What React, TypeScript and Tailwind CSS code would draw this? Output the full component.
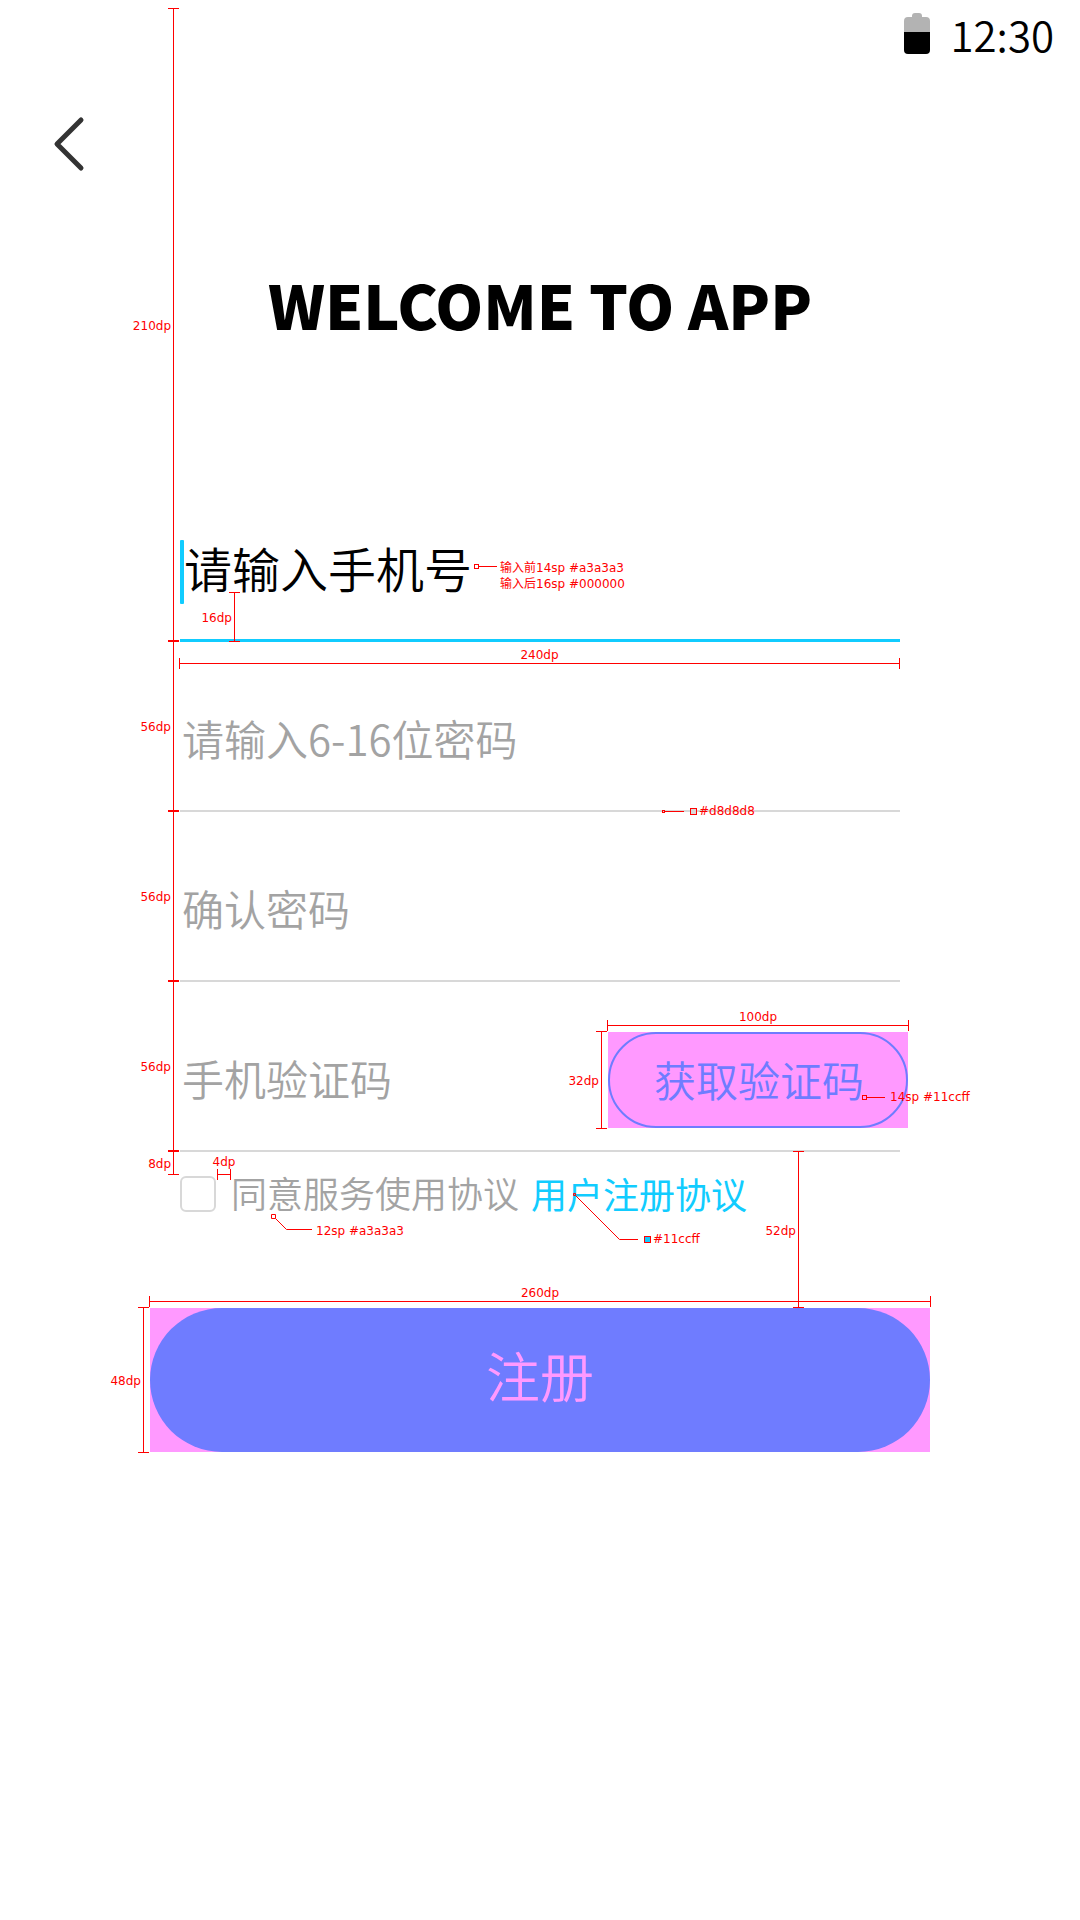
import type { ReactNode } from "react";

const GUIDE_TEXT = "whitespace-nowrap text-xs leading-4 text-[#ff0000]";

/* Horizontal measurement: a line with end ticks and a label centred above it. */
function HGuide({ label, place, lift = "bottom-[6px]" }: { label: string; place: string; lift?: string }) {
  return (
    <div aria-hidden="true" className={`pointer-events-none absolute h-[11px] border-x border-[#ff0000] ${place}`}>
      <div className="absolute inset-x-0 top-[5px] h-px bg-[#ff0000]" />
      <div className={`absolute -inset-x-4 text-center ${GUIDE_TEXT} ${lift}`}>{label}</div>
    </div>
  );
}

/* Vertical measurement: a line with end ticks and a label at its left. */
function VGuide({ label, place }: { label: string; place: string }) {
  return (
    <div aria-hidden="true" className={`pointer-events-none absolute flex w-[11px] items-center border-y border-[#ff0000] ${place}`}>
      <div className="absolute inset-y-0 left-[5px] w-px bg-[#ff0000]" />
      <div className={`absolute right-[8px] pt-[2px] ${GUIDE_TEXT}`}>{label}</div>
    </div>
  );
}

function Note({ place, children }: { place: string; children: ReactNode }) {
  return (
    <div aria-hidden="true" className={`pointer-events-none absolute z-10 ${GUIDE_TEXT} ${place}`}>
      {children}
    </div>
  );
}

const INPUT =
  "h-full min-w-0 flex-1 bg-transparent pt-[22px] font-[350] outline-none";

export default function App() {
  return (
    <div className="min-h-screen overflow-x-hidden bg-white font-['Noto_Sans_CJK_SC',sans-serif] text-black">
      <header>
        <div className="flex h-[68px] items-center justify-end gap-5 pr-[26px]">
          <svg width="26" height="42" viewBox="0 0 26 42" aria-label="电量">
            <path d="M8 4V3q0-3 3-3h4q3 0 3 3v1h4q4 0 4 4v12H0V8q0-4 4-4z" fill="#b3b3b3" />
            <path d="M0 19h26v18q0 4-4 4H4q-4 0-4-4z" fill="#000" />
          </svg>
          <time className="text-[42px] leading-[68px] font-[350]">12:30</time>
        </div>
        <button type="button" aria-label="返回" className="mt-[46px] ml-[51px] block">
          <svg width="36" height="60" viewBox="0 0 36 60" fill="none" stroke="#333" strokeWidth="5" strokeLinecap="round" strokeLinejoin="round">
            <path d="M30 6L6 30L30 54" />
          </svg>
        </button>
        <h1 className="mt-[86px] mb-[124px] text-center text-[61px] leading-[88px] font-black">WELCOME TO APP</h1>
      </header>

      <form className="mx-auto w-2/3" onSubmit={(e) => e.preventDefault()}>
        <div className="relative flex h-[170px] items-center border-b-3 border-[#11ccff]">
          <div className="absolute top-[68px] left-0 h-16 w-1 rounded-[1px] bg-[#11ccff]" />
          <input type="tel" aria-label="手机号" placeholder="请输入手机号" className={`${INPUT} pl-1 text-[48px] placeholder:text-black`} />
        </div>
        <div className="flex h-[170px] items-center border-b-2 border-[#d8d8d8]">
          <input type="password" aria-label="密码" placeholder="请输入6-16位密码" className={`${INPUT} pl-[2px] text-[42px] placeholder:text-[#a3a3a3]`} />
        </div>
        <div className="flex h-[170px] items-center border-b-2 border-[#d8d8d8]">
          <input type="password" aria-label="确认密码" placeholder="确认密码" className={`${INPUT} pl-[2px] text-[42px] placeholder:text-[#a3a3a3]`} />
        </div>
        <div className="relative flex h-[170px] items-center border-b-2 border-[#d8d8d8]">
          <input type="text" aria-label="手机验证码" placeholder="手机验证码" className={`${INPUT} pl-[2px] text-[42px] placeholder:text-[#a3a3a3]`} />
          <div className="relative -mr-2 mt-[50px] h-24 w-[300px] shrink-0 self-start bg-[#ff99ff]">
            <button type="button" className="size-full rounded-full border-2 border-[#6f7cff] pb-1 pl-[2px] text-[42px] font-[350] text-[#6f7cff]">
              获取验证码
            </button>
            <div className="font-['DejaVu_Sans',sans-serif]">
              <HGuide label="100dp" place="-top-[12px] -inset-x-px" />
              <VGuide label="32dp" place="-top-px -bottom-px -left-[12px]" />
              <Note place="left-[254px] top-[57px] flex items-center">
                <span className="size-[5px] border border-[#ff0000]" />
                <span className="mr-[5px] h-px w-[18px] bg-[#ff0000]" />
                14sp #11ccff
              </Note>
            </div>
          </div>
        </div>

        <div className="relative mt-6 flex h-9 items-center text-[36px] leading-9 font-[350] whitespace-nowrap">
          <input id="agree" type="checkbox" className="size-9 shrink-0 appearance-none rounded-md border-2 border-[#d8d8d8] checked:bg-[#11ccff]" />
          <label htmlFor="agree" className="ml-[15px] pb-1 text-[#a3a3a3]">同意服务使用协议</label>
          <a href="#agreement" className="ml-3 pb-[2px] font-normal text-[#11ccff]">用户注册协议</a>
          <div className="font-['DejaVu_Sans',sans-serif] font-normal">
            <HGuide label="4dp" place="-top-[7px] left-[37px] w-[14px]" lift="bottom-[10px]" />
            <VGuide label="52dp" place="-top-[25px] left-[613px] h-[157px]" />
            <svg aria-hidden="true" className="absolute left-[91px] top-[38px]" width="42" height="17" fill="none" stroke="#f00">
              <path d="M.5.5h4v4h-4zM4.500 4.500L15.500 15.500H41" />
            </svg>
            <Note place="left-[136px] top-[47px]">12sp #a3a3a3</Note>
            <svg aria-hidden="true" className="absolute left-[393px] top-[17px]" width="66" height="48" fill="none" stroke="#f00">
              <path d="M.5.5h2v2h-2zM2.500 2.500L46.500 46.500H65" />
            </svg>
            <Note place="left-[464px] top-[55px] flex items-center gap-[2px]">
              <span className="size-[7px] border border-[#ff0000] bg-[#11ccff]" />
              #11ccff
            </Note>
          </div>
        </div>

        <div className="relative -mx-[30px] mt-24 h-36 bg-[#ff99ff]">
          <button type="submit" className="size-full rounded-full bg-[#6f7cff] pb-3 text-[54px] font-[350] text-[#ff99ff]">
            注册
          </button>
          <div className="font-['DejaVu_Sans',sans-serif]">
            <HGuide label="260dp" place="-top-[12px] -inset-x-px" />
            <VGuide label="48dp" place="-top-px -bottom-px -left-[12px]" />
          </div>
        </div>

        {/* Measurements of the field rows, stacked over the form. */}
        <div className="relative h-0 font-['DejaVu_Sans','Noto_Sans_CJK_SC',sans-serif]">
          <div className="pointer-events-none absolute inset-x-0 bottom-0 h-[980px]">
            <VGuide label="210dp" place="-left-[12px] -top-[464px] h-[633px]" />
            <VGuide label="56dp" place="-left-[12px] top-[169px] h-[170px]" />
            <VGuide label="56dp" place="-left-[12px] top-[339px] h-[170px]" />
            <VGuide label="56dp" place="-left-[12px] top-[509px] h-[170px]" />
            <VGuide label="8dp" place="-left-[12px] top-[679px] h-[24px]" />
            <VGuide label="16dp" place="left-[49px] top-[120px] h-[50px]" />
            <HGuide label="240dp" place="-left-px right-0 top-[186px]" />
            <Note place="left-[294px] top-[88px] flex items-start">
              <span className="mt-[4px] size-[5px] border border-[#ff0000]" />
              <span className="mt-[6px] mr-[3px] h-px w-[18px] bg-[#ff0000]" />
              <span>输入前14sp #a3a3a3<br />输入后16sp #000000</span>
            </Note>
            <Note place="left-[482px] top-[331px] flex items-center">
              <span className="size-[3px] border border-[#ff0000]" />
              <span className="mr-[6px] h-px w-[19px] bg-[#ff0000]" />
              <span className="mr-[2px] size-[7px] border border-[#ff0000] bg-[#d8d8d8]" />
              #d8d8d8
            </Note>
          </div>
        </div>
      </form>
    </div>
  );
}
